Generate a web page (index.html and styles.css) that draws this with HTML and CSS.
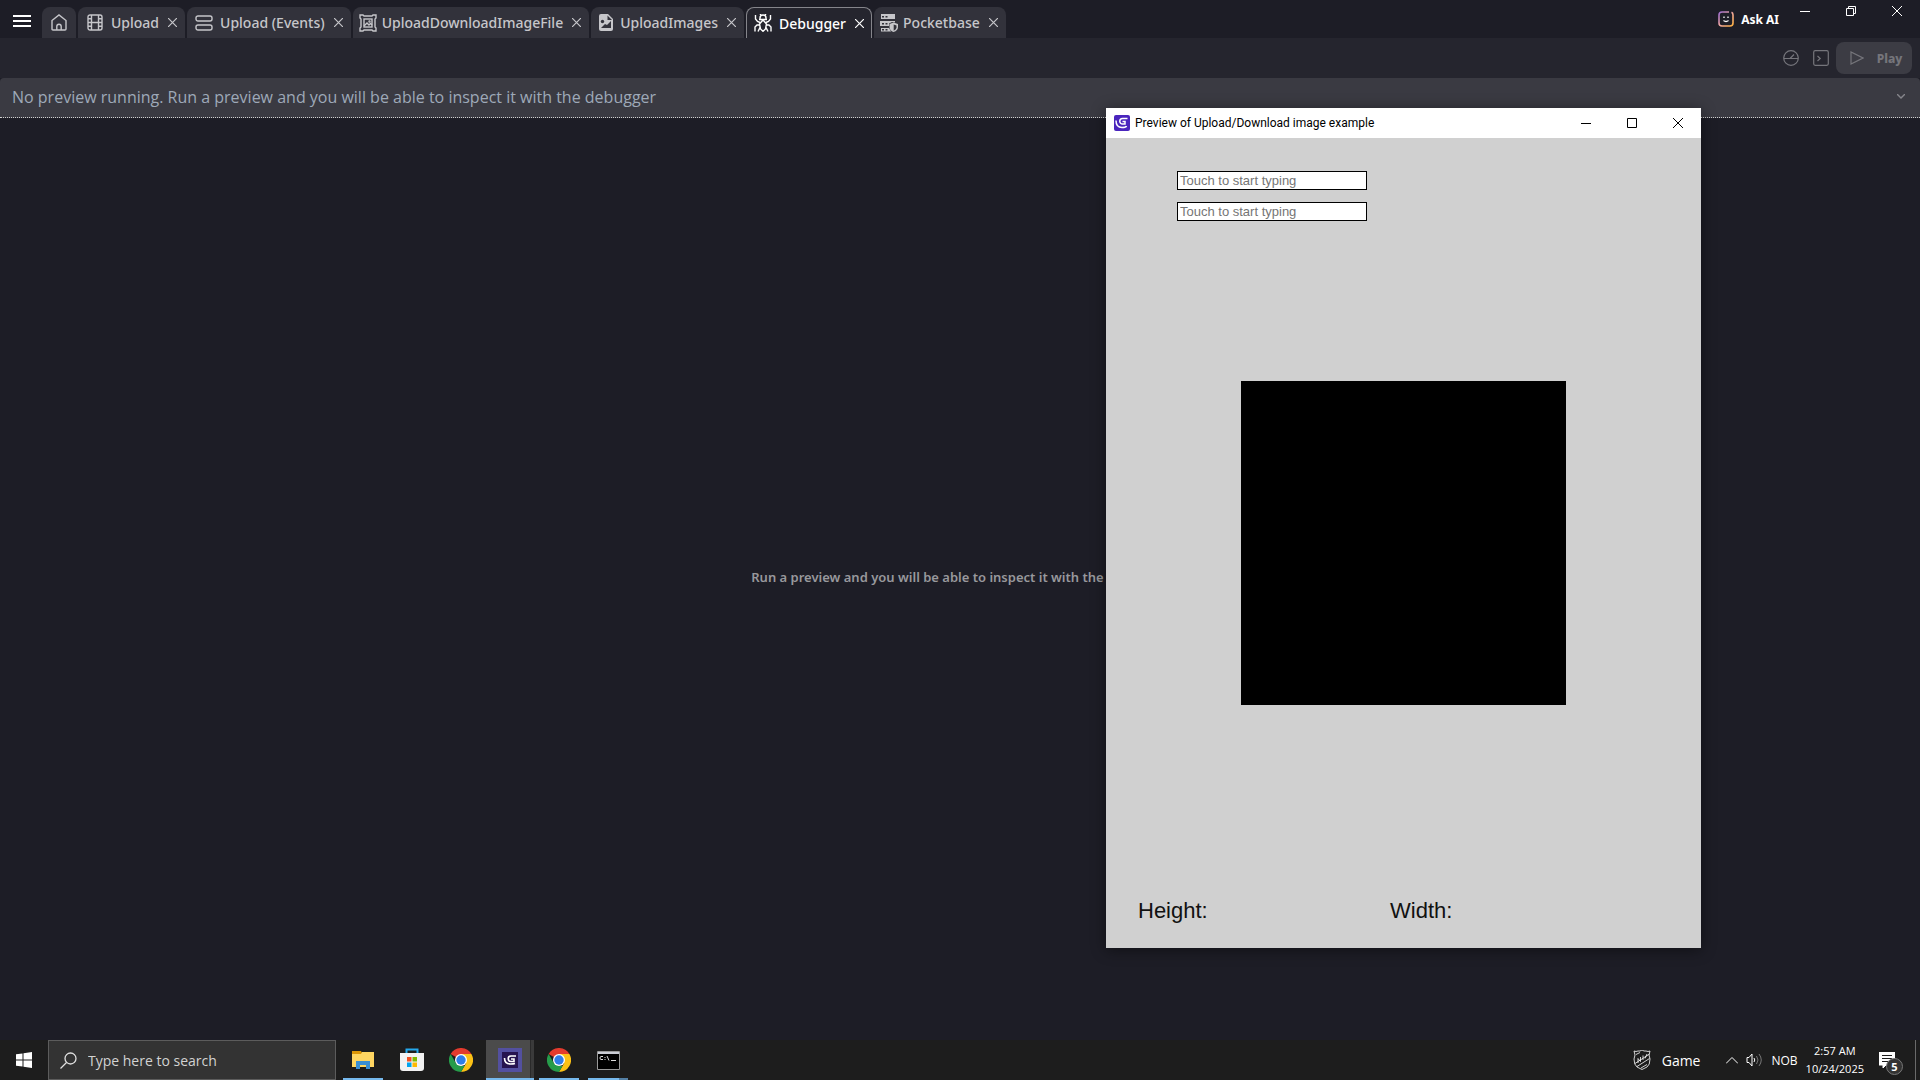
FILE: index.html
```html
<!DOCTYPE html>
<html lang="en">
<head>
    <meta charset="UTF-8">
    <meta name="viewport" content="width=device-width, initial-scale=1.0">
    <title>Debugger</title>
    <link rel="stylesheet" href="styles.css">
</head>
<body>
<header class="top_bar">
    <button type="button" class="menu" aria-label="Menu"><svg width="18" height="14" viewBox="0 0 18 14"><path d="M0 2h18M0 7h18M0 12h18" stroke="#fff" stroke-width="2"/></svg></button>
    <nav class="tabs">
        <div class="tab home">
            <button type="button" class="tab_name" aria-label="Home"><svg width="16" height="17" viewBox="0 0 16 17"><path d="M1 6.5 8 1l7 5.500V15q0 1-1 1H2q-1 0-1-1zM5.800 16v-3.500a2.200 2.200 0 0 1 4.400 0V16"/></svg></button>
        </div>
        <div class="tab">
            <button type="button" class="tab_name"><span class="icon"><svg width="16" height="17" viewBox="0 0 16 17"><rect x="1" y="1" width="14" height="15" rx="2"/><path d="M4.500 1v15M11.500 1v15M4.500 8.500h7M1 4.700h3.500M1 8.500h3.500M1 12.300h3.500M11.500 4.700H15M11.500 8.500H15M11.500 12.300H15"/></svg></span>Upload</button>
            <button type="button" class="close" aria-label="Close Upload"><svg width="9" height="9" viewBox="0 0 9 9"><path d="m0 0 9 9M9 0 0 9"/></svg></button>
        </div>
        <div class="tab">
            <button type="button" class="tab_name"><span class="icon"><svg width="18" height="16" viewBox="0 0 18 16"><rect x="1" y="1" width="16" height="5" rx="2"/><rect x="1" y="10" width="16" height="5" rx="2"/></svg></span>Upload (Events)</button>
            <button type="button" class="close" aria-label="Close Upload (Events)"><svg width="9" height="9" viewBox="0 0 9 9"><path d="m0 0 9 9M9 0 0 9"/></svg></button>
        </div>
        <div class="tab">
            <button type="button" class="tab_name"><span class="icon small"><svg width="18" height="18" viewBox="0 0 18 18"><path d="M1 1h3l1 1h8l1-1h3v3l-1 1v8l1 1v3h-3l-1-1H5l-1 1H1v-3l1-1V5L1 4z"/><rect x="5" y="5" width="8" height="8"/><path d="m5 12 3-3 2 2 1.500-1.500L13 11"/><circle cx="10.500" cy="7.500" r=".5"/></svg></span>UploadDownloadImageFile</button>
            <button type="button" class="close" aria-label="Close UploadDownloadImageFile"><svg width="9" height="9" viewBox="0 0 9 9"><path d="m0 0 9 9M9 0 0 9"/></svg></button>
        </div>
        <div class="tab">
            <button type="button" class="tab_name"><span class="icon small"><svg width="14" height="17" viewBox="0 0 14 17"><path class="solid" d="M2 0h7l5 5v10q0 2-2 2H2q-2 0-2-2V2q0-2 2-2z"/><path class="hole" d="M8.500 1.500V6H13zM2 14l4-4 2 1 4-4v7z"/><circle class="hole" cx="3.500" cy="7.500" r="1.700"/></svg></span>UploadImages</button>
            <button type="button" class="close" aria-label="Close UploadImages"><svg width="9" height="9" viewBox="0 0 9 9"><path d="m0 0 9 9M9 0 0 9"/></svg></button>
        </div>
        <div class="tab active">
            <button type="button" class="tab_name"><span class="icon"><svg width="18" height="18" viewBox="0 0 18 18"><path d="M6 5.500V4a3 3 0 0 1 6 0v1.500M5 5.500h8M9 6l-3.500 4 1 5L9 17.300l2.500-2.300 1-5zM6 8.500 3.500 7.500 1.500 5V1M12 8.500l2.500-1 2-2.500V1M5.500 11H3l-2 2v4.500M12.500 11H15l2 2v4.500M6 13.500l-2 4M12 13.500l2 4M7 1 6 0M11 1l1-1"/></svg></span>Debugger</button>
            <button type="button" class="close" aria-label="Close Debugger"><svg width="9" height="9" viewBox="0 0 9 9"><path d="m0 0 9 9M9 0 0 9"/></svg></button>
        </div>
        <div class="tab">
            <button type="button" class="tab_name"><span class="icon small"><svg width="18" height="18" viewBox="0 0 18 18"><path class="solid" d="M1 0h14v5H1zM0 7h15v1.500l-3-.5-3 1.500V12H0zM1 14h8l2 3.500H1z"/><path class="hole" d="M2 2h2v1.500H2zM5.500 2h2v1.500h-2zM2 9h2v1.500H2zM5.500 9h2v1.500h-2zM2 15h2v1.500H2zM5.500 15h2v1.500h-2z"/><path class="solid" d="M13.500 8.500 18 10v3q0 3.500-4.500 5Q9.500 16.500 9.500 13v-3z"/><path class="hole" d="M13.700 10.500 16.500 11.500v2q0 2-2.800 3.200z"/></svg></span>Pocketbase</button>
            <button type="button" class="close" aria-label="Close Pocketbase"><svg width="9" height="9" viewBox="0 0 9 9"><path d="m0 0 9 9M9 0 0 9"/></svg></button>
        </div>
    </nav>
    <button type="button" class="ask_ai">
        <svg width="16" height="16" viewBox="0 0 16 16">
            <defs><linearGradient id="ai" x1="0" y1="0" x2="1" y2="1"><stop offset="0" stop-color="#9b6bd0"/><stop offset=".5" stop-color="#f2a8a0"/><stop offset="1" stop-color="#ffb13d"/></linearGradient></defs>
            <path d="M11 1H4Q1 1 1 4v8q0 3 3 3h8q3 0 3-3V4q0-2-1.500-2.700" fill="none" stroke="url(#ai)" stroke-width="1.600"/>
            <path d="M6 5.500V7M10 5.500V7M5.500 9.500q2.500 2 5 0" fill="none" stroke="#fff" stroke-width="1.300"/>
        </svg>Ask AI</button>
    <div class="app_controls">
        <button type="button" aria-label="Minimize"><svg width="10" height="10" viewBox="0 0 10 10"><path d="M0 5.500h10"/></svg></button>
        <button type="button" aria-label="Restore"><svg width="10" height="10" viewBox="0 0 10 10"><path d="M.5 2.500h7v7h-7zM2.500 2.500v-2h7v7h-2"/></svg></button>
        <button type="button" aria-label="Close"><svg width="10" height="10" viewBox="0 0 10 10"><path d="m0 0 10 10M10 0 0 10"/></svg></button>
    </div>
</header>
<div class="toolbar">
    <button type="button" class="tool" aria-label="Profiler" disabled><svg width="16" height="16" viewBox="0 0 16 16"><circle cx="8" cy="8" r="7.300"/><path d="M1 8.500h14M7 8.500 11 4.500"/></svg></button>
    <button type="button" class="tool" aria-label="Console" disabled><svg width="16" height="16" viewBox="0 0 16 16"><rect x=".7" y=".7" width="14.600" height="14.600" rx="1.500"/><path d="m4.500 6 2.700 2.500L4.500 11"/></svg></button>
    <button type="button" class="play" disabled><svg width="14" height="14" viewBox="0 0 14 14"><path d="M1 1v12l12-6z"/></svg>Play</button>
</div>
<div class="status">
    <span>No preview running. Run a preview and you will be able to inspect it with the debugger</span>
    <svg width="8" height="5" viewBox="0 0 8 5"><path d="m0 0 4 4 4-4"/></svg>
</div>
<main class="debugger">
    <p>Run a preview and you will be able to inspect it with the debugger</p>
</main>

<section class="preview">
    <div class="title_bar">
        <svg width="16" height="16" viewBox="0 0 16 16"><rect width="16" height="16" rx="2" fill="#4a25bd"/><path d="M13.500 3.500H8.500a2.500 2.500 0 0 0 0 5.500H11V6.500H8.500M2 5.500q0 7 6 7 4 0 4.500-1.500" fill="none" stroke="#fff" stroke-width="1.500"/></svg>
        <h1>Preview of Upload/Download image example</h1>
        <div class="window_controls">
            <button type="button" aria-label="Minimize"><svg width="10" height="10" viewBox="0 0 10 10"><path d="M0 5.500h10"/></svg></button>
            <button type="button" aria-label="Maximize"><svg width="10" height="10" viewBox="0 0 10 10"><path d="M.5.5h9v9h-9z"/></svg></button>
            <button type="button" aria-label="Close"><svg width="10" height="10" viewBox="0 0 10 10"><path d="m0 0 10 10M10 0 0 10"/></svg></button>
        </div>
    </div>
    <div class="game">
        <div class="fields">
            <input type="text" aria-label="First field" placeholder="Touch to start typing">
            <input type="text" aria-label="Second field" placeholder="Touch to start typing">
        </div>
        <div class="image"></div>
        <div class="sizes">
            <span>Height:</span>
            <span>Width:</span>
        </div>
    </div>
</section>

<footer class="taskbar">
    <button type="button" class="start" aria-label="Start"><svg width="16" height="16" viewBox="0 0 16 16"><path fill="#fff" d="M0 2.300 6.500 1.400V7.500H0zM7.500 1.200 16 0v7.500H7.500zM0 8.500h6.500v6.100L0 13.700zM7.500 8.500H16V16l-8.500-1.200z"/></svg></button>
    <label class="search">
        <svg width="17" height="17" viewBox="0 0 17 17"><circle cx="10.500" cy="6.500" r="5.500"/><path d="M6.500 10.500.5 16.500"/></svg>
        <input type="text" aria-label="Search" placeholder="Type here to search">
    </label>
    <div class="apps">
        <button type="button" class="app open" aria-label="File Explorer"><svg width="22" height="18" viewBox="0 0 22 18"><path fill="#dc9606" d="M0 0h9l1 2v4H0z"/><path fill="#ffd661" d="M0 3h9l1-2h12v15H0z"/><path fill="#3a8fd3" d="M4 10h14v8h-4v-4H8v4H4z"/></svg></button>
        <button type="button" class="app" aria-label="Microsoft Store"><svg width="24" height="24" viewBox="0 0 24 24"><path d="M6.500 6V1.500h11V6" fill="none" stroke="#25a9ec" stroke-width="2"/><path fill="#f2f2f2" d="M0 5h24v15q0 3-3 3H3q-3 0-3-3z"/><path fill="#f25022" d="M7 9h4.500v4.500H7z"/><path fill="#7fba00" d="M12.500 9H17v4.500h-4.500z"/><path fill="#00a4ef" d="M7 14.500h4.500V19H7z"/><path fill="#ffb900" d="M12.500 14.500H17V19h-4.500z"/></svg></button>
        <button type="button" class="app" aria-label="Google Chrome"><svg width="24" height="24" viewBox="0 0 24 24"><path fill="#e33b2e" d="M12 12 1.600 6A12 12 0 0 1 22.400 6z"/><path fill="#fbc116" d="M12 6h10.400A12 12 0 0 1 12 24l5.200-9z"/><path fill="#269c4a" d="M1.600 6 6.800 15 12 18h3.500L12 24A12 12 0 0 1 1.600 6z"/><circle cx="12" cy="12" r="6" fill="#fff"/><circle cx="12" cy="12" r="4.700" fill="#2f7de9"/></svg></button>
        <button type="button" class="app current" aria-label="GDevelop"><svg width="24" height="24" viewBox="0 0 24 24"><path fill="#5350a0" d="M0 0h24v24H0z"/><path fill="#26144f" d="M4 4h16v16H4z"/><path d="M18 8h-5a2.500 2.500 0 0 0 0 5.500h3V11h-3M6.500 10q0 6 6 6 3 0 4.500-.5" fill="none" stroke="#fff" stroke-width="1.600"/></svg></button>
        <button type="button" class="app open" aria-label="Google Chrome, second window"><svg width="24" height="24" viewBox="0 0 24 24"><path fill="#e33b2e" d="M12 12 1.600 6A12 12 0 0 1 22.400 6z"/><path fill="#fbc116" d="M12 6h10.400A12 12 0 0 1 12 24l5.200-9z"/><path fill="#269c4a" d="M1.600 6 6.800 15 12 18h3.500L12 24A12 12 0 0 1 1.600 6z"/><circle cx="12" cy="12" r="6" fill="#fff"/><circle cx="12" cy="12" r="4.700" fill="#2f7de9"/></svg></button>
        <button type="button" class="app open stacked" aria-label="Command Prompt"><svg width="23" height="19" viewBox="0 0 23 19"><path fill="#000" stroke="#9a9a9a" d="M.5.5h22v18H.5z"/><path fill="#c9ccd4" d="M1 1h21v2H1z"/><path d="M6 5.500H4q-1 0-1 1.500T4 8.500h2M8 6v1M8 8v1M10 5 12 9.500M14 9.500h5" fill="none" stroke="#ddd"/></svg></button>
    </div>
    <div class="tray">
        <button type="button" class="game_link"><svg width="18" height="20" viewBox="0 0 18 20"><path d="M1 1q2 1 4 0h2l2-1 2 1h2q2 1 4 0l-1 4 1 4q0 6-3 8l-5 2.500L4 17q-3-2-3-8l1-4z"/><path d="M2 13.500 16.500 4M4 16.500 16.500 8.500M5 13V8.500l2.500 3V7M10 10V5.500M12 8.500l2-4.500M3 4.500l4-2M8 18l6-3.500"/></svg>Game</button>
        <button type="button" class="chevron" aria-label="Show hidden icons"><svg width="12" height="7" viewBox="0 0 12 7"><path d="m0 6.500 6-6 6 6"/></svg></button>
        <button type="button" class="volume" aria-label="Volume"><svg width="17" height="14" viewBox="0 0 17 14"><path d="M1 4.500h2l3-3.500v12L3 9.500H1zM8 5q1.500 2 0 4"/><path class="faint" d="M10.500 3q3 4 0 8M13 1q4.500 6 0 12"/></svg></button>
        <span class="language">NOB</span>
        <time class="clock" datetime="2025-10-24T02:57">2:57 AM<br>10/24/2025</time>
        <button type="button" class="notices" aria-label="Notifications"><svg width="16" height="16" viewBox="0 0 16 16"><path fill="#fff" d="M0 0h16v13H7l-3 3v-3H0z"/><path d="M3 3.500h10M3 6.500h10M3 9.500h6" stroke="#1d1d1d"/></svg><span class="badge">5</span></button>
    </div>
</footer>
</body>
</html>
```

FILE: styles.css
```css
*{
    box-sizing: border-box;
}
body{
    margin: 0px;
    min-height: 100vh;
    display: flex;
    flex-direction: column;
    background: #1d1d26;
    font-family: "Noto Sans", sans-serif;
    overflow: hidden;
}
button{
    display: flex;
    align-items: center;
    justify-content: center;
    padding: 0px;
    border: 0;
    background: none;
    color: inherit;
    font: inherit;
}
svg{
    flex: none;
}
.top_bar{
    display: flex;
    height: 38px;
    color: #c6c6ca;
}
.menu{
    width: 42px;
    padding-top: 4px;
    padding-left: 2px;
}
.tabs{
    display: flex;
    gap: 2px;
    padding-top: 7px;
    font-size: 14px;
    font-weight: 500;
}
.tab{
    display: flex;
    padding: 0px 8px 0px 5px;
    gap: 9px;
    background: #32323b;
    border-radius: 8px 8px 0px 0px;
}
.home{
    padding: 0px 9px;
}
.active{
    padding: 0px 7px 0px 4px;
    background: #25252e;
    border: 1px solid #85858b;
    border-bottom: 0;
    color: #fff;
}
.tab_name{
    gap: 4px;
    white-space: nowrap;
}
.icon{
    display: flex;
    justify-content: center;
    width: 24px;
}
.small{
    width: 20px;
}
.tabs svg{
    fill: none;
    stroke: currentColor;
    stroke-width: 1.4;
}
.tabs .close svg{
    stroke-width: 1.2;
}
.tabs .solid{
    fill: currentColor;
    stroke: none;
}
.tabs .hole{
    fill: #32323b;
    stroke: none;
}
.ask_ai{
    gap: 7px;
    margin-left: auto;
    font-size: 12px;
    font-weight: 700;
    color: #fff;
}
.app_controls{
    display: flex;
    height: 22px;
    margin-left: 3px;
}
.app_controls button{
    width: 46px;
}
.app_controls svg{
    fill: none;
    stroke: #fff;
}
.toolbar{
    display: flex;
    align-items: center;
    justify-content: flex-end;
    gap: 14px;
    height: 40px;
    padding-right: 8px;
    background: #25252e;
    color: #75757b;
}
.toolbar svg{
    fill: none;
    stroke: currentColor;
    stroke-width: 1.2;
}
.play{
    gap: 13px;
    width: 76px;
    height: 32px;
    margin-left: -7px;
    padding-left: 4px;
    border-radius: 8px;
    background: #3c3c44;
    font-size: 12px;
    font-weight: 800;
}
.status{
    display: flex;
    align-items: center;
    justify-content: space-between;
    height: 40px;
    padding: 0px 15px 2px 12px;
    border-bottom: 1px dotted #d0d0d0;
    border-radius: 4px 4px 0px 0px;
    background: #3a3a42;
    color: #9ea9b8;
    font-family: "Open Sans", sans-serif;
    font-size: 16px;
}
.status svg{
    fill: none;
    stroke: #85858b;
    stroke-width: 1.4;
}
.debugger{
    flex: 1;
    display: flex;
    align-items: center;
    justify-content: center;
    color: #98989c;
    font-size: 13px;
    font-weight: 600;
}
.debugger p{
    margin: 0px;
    padding-bottom: 4px;
}
/* preview window, floats over the editor */
.preview{
    position: absolute;
    top: 108px;
    right: 219px;
    width: 595px;
    background: #d0d0d0;
    box-shadow: 0px 2px 14px rgba(0, 0, 0, 0.45);
}
.title_bar{
    display: flex;
    align-items: center;
    height: 30px;
    padding-left: 8px;
    background: #fff;
    color: #000;
    font-family: Roboto, sans-serif;
}
.title_bar h1{
    margin: 0px 0px 0px 5px;
    font-size: 12px;
    font-weight: 400;
}
.window_controls{
    display: flex;
    height: 30px;
    margin-left: auto;
}
.window_controls button{
    width: 46px;
}
.window_controls svg{
    fill: none;
    stroke: #000;
}
.game{
    display: grid;
    grid-template-rows: 1fr auto 1fr;
    height: 810px;
    font-family: "Liberation Sans", Arial, sans-serif;
}
.fields{
    display: flex;
    flex-direction: column;
    align-items: flex-start;
    gap: 12px;
    padding: 33px 71px;
}
.fields input{
    width: 190px;
    height: 19px;
    padding: 0px 2px;
    border: 1px solid #000;
    background: #fff;
    font-family: inherit;
    font-size: 13px;
}
.fields input::placeholder{
    color: #757575;
}
.image{
    width: 325px;
    height: 324px;
    justify-self: center;
    background: #000;
}
.sizes{
    display: grid;
    grid-template-columns: 252px 1fr;
    align-self: end;
    padding: 0px 32px 24px;
    color: #111;
    font-size: 22px;
}
.taskbar{
    display: flex;
    height: 40px;
    background: #1d1d1d;
    color: #fff;
    font-family: "Open Sans", sans-serif;
}
.start{
    width: 48px;
}
.search{
    display: flex;
    align-items: center;
    gap: 11px;
    width: 288px;
    padding-left: 11px;
    border: 1px solid #5c5c5c;
    background: #333;
}
.search svg{
    fill: none;
    stroke: #e0e0e0;
    stroke-width: 1.3;
}
.search input{
    flex: 1;
    min-width: 0;
    padding: 0px;
    border: 0;
    background: none;
    color: #fff;
    font-family: inherit;
    font-size: 14px;
}
.search input::placeholder{
    color: #d2d2d2;
}
.apps{
    display: flex;
    gap: 1px;
    padding-left: 3px;
}
.app{
    width: 48px;
}
.open{
    background: linear-gradient(#76b9ed, #76b9ed) center bottom / 40px 2px no-repeat;
}
.stacked{
    background-image: linear-gradient(to right, #76b9ed 31px, #5480a5 31px);
}
.current{
    background: linear-gradient(#76b9ed, #76b9ed) center bottom / 100% 2px no-repeat,
                linear-gradient(to right, #4b4b4b 44px, #2a2a2a 44px, #2a2a2a 45px, #3a3a3a 45px);
}
.tray{
    display: flex;
    align-items: center;
    margin: 0px 4px 0px auto;
    border-right: 1px solid #6a6a6a;
    font-size: 12px;
}
.tray svg{
    fill: none;
    stroke: #fff;
}
.game_link{
    gap: 11px;
    margin-right: 26px;
    font-size: 14px;
}
.game_link svg{
    stroke-width: 0.8;
}
.volume{
    margin: 0px 8px;
}
.tray .faint{
    stroke: #777;
}
.clock{
    margin: 0px 15px 0px 8px;
    font-size: 11px;
    line-height: 18px;
    text-align: center;
}
.notices{
    position: relative;
    margin-right: 20px;
}
.badge{
    position: absolute;
    top: 6px;
    left: 7px;
    width: 17px;
    height: 17px;
    border: 1px solid #777;
    border-radius: 50%;
    background: #333;
    font-size: 11px;
    font-weight: 700;
    line-height: 15px;
    text-align: center;
}
```
